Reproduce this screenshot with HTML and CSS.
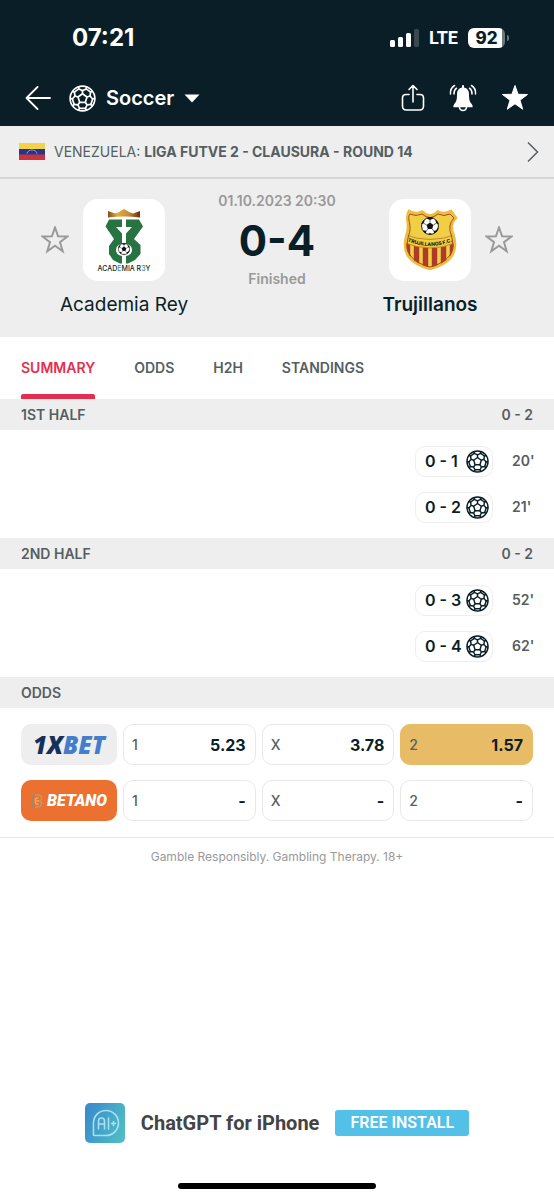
FILE: index.html
```html
<!DOCTYPE html>
<html lang="en">
<head>
    <meta charset="UTF-8">
    <meta name="viewport" content="width=device-width, initial-scale=1.0">
    <title>Academia Rey - Trujillanos</title>
    <link rel="stylesheet" href="styles.css">
</head>
<body>

    <!-- shared icons -->
    <svg class="sprite" aria-hidden="true">
        <symbol id="ball" viewBox="-12 -12 24 24">
            <g fill="none" stroke="currentColor" stroke-width="1.5" stroke-linejoin="round">
                <circle r="11"/>
                <path d="M0-4.2 4-1.3 2.5 3.4H-2.5L-4-1.3Z"/>
                <path d="M0-4.2V-7M4-1.3 6.7-2.2M2.5 3.4 4.1 5.7M-2.5 3.4-4.1 5.7M-4-1.3-6.7-2.2"/>
                <path d="M-3.3-10.5-3.3-8.5 0-7 3.3-8.5 3.3-10.5"/>
                <path d="M9.1-6.2 7.2-5.700 6.7-2.200 9 .5 11-.2"/>
                <path d="M8.900 6.500 7.500 5.200 4.100 5.700 2.600 8.700 3.600 10.400"/>
                <path d="M-8.900 6.500-7.500 5.200-4.100 5.700-2.600 8.700-3.600 10.400"/>
                <path d="M-9.1-6.2-7.2-5.700-6.7-2.200-9 .5-11-.2"/>
                <path d="M3.3-8.500 7.200-5.700M9 .5 7.500 5.200M2.600 8.700H-2.600M-7.500 5.200-9 .5M-7.200-5.700-3.300-8.500"/>
            </g>
        </symbol>
        <symbol id="star" viewBox="0 0 28 28">
            <path d="M14 1.5 17.1 10.3 26.5 10.5 19 16.2 21.7 25.2 14 19.8 6.3 25.2 9 16.2 1.5 10.5 10.9 10.3Z"/>
        </symbol>
        <symbol id="football" viewBox="-10 -10 20 20">
            <circle r="9.4" fill="#fff" stroke="#111" stroke-width="1"/>
            <path fill="#111" d="M0-4 3.8-1.2 2.4 3.3H-2.4L-3.8-1.2ZM-4-8.6 0-6.6 4-8.6 2-9.6H-2ZM9.5-1.8 7-3 5.8-6.5 7.6-5.7 9.4-3ZM9.4 1 7 4.4 7.6 6.4 9 4ZM4.6 8.2 4 5.6 7 4.6 7.6 6.2ZM-4.6 8.2-4 5.6-7 4.6-7.6 6.2ZM-9.5-1.8-7-3-5.8-6.5-7.6-5.7-9.4-3ZM-2 9.3 0 7.6 2 9.3Z"/>
            <path stroke="#111" stroke-width=".7" d="M0-4V-7M3.8-1.2 7-3M2.4 3.3 4.3 5.8M-2.4 3.3-4.3 5.8M-3.8-1.2-7-3"/>
        </symbol>
    </svg>

    <header class="top">
        <div class="status-bar">
            <span class="time">07:21</span>
            <div class="status-icons">
                <svg width="29" height="18" viewBox="0 0 29 18" fill="#fff">
                    <rect x="0" y="11" width="5" height="7" rx="1.5"/>
                    <rect x="8" y="8" width="5" height="10" rx="1.5"/>
                    <rect x="16" y="4" width="5" height="14" rx="1.5"/>
                    <rect x="24" y="0" width="5" height="18" rx="1.5" fill="#39494f"/>
                </svg>
                <span class="network">LTE</span>
                <span class="battery">92</span>
            </div>
        </div>
        <div class="app-bar">
            <button class="icon-button" aria-label="Back">
                <svg width="26" height="24" viewBox="0 0 26 24" fill="none" stroke="#fff" stroke-width="1.8" stroke-linecap="round" stroke-linejoin="round">
                    <path d="M12.500 1 1.500 12 12.500 23M1.500 12H25"/>
                </svg>
            </button>
            <button class="sport">
                <svg width="27" height="27"><use href="#ball"/></svg>
                <span>Soccer</span>
                <svg width="16" height="9" viewBox="0 0 16 9"><path d="M.5 .5H15.500L8 8.500Z" fill="#fff"/></svg>
            </button>
            <div class="actions">
                <button class="icon-button" aria-label="Share">
                    <svg width="24" height="28" viewBox="0 0 24 28" fill="none" stroke="#fff" stroke-width="1.600" stroke-linecap="round" stroke-linejoin="round">
                        <path d="M8 10.500H5Q1.500 10.500 1.500 14V22Q1.500 26 5.500 26H18.500Q22.500 26 22.500 22V14Q22.500 10.500 19 10.500H16M12 18V2M8 5.500 12 1.500 16 5.500"/>
                    </svg>
                </button>
                <button class="icon-button" aria-label="Notifications">
                    <svg width="28" height="28" viewBox="0 0 28 28" fill="none" stroke="#fff" stroke-width="1.500" stroke-linecap="round">
                        <path fill="#fff" stroke="none" d="M13 1.500Q14 .5 15 1.500V3.500Q20 4.600 20 10C20 15.500 20.500 17.500 22.700 20Q24.300 22.300 23.500 23.200H4.500Q3.700 22.300 5.300 20C7.500 17.500 8 15.500 8 10Q8 4.600 13 3.500Z"/>
                        <path d="M10.500 23.500Q11 26.600 14 26.600 17 26.600 17.500 23.500M5 10Q4.700 6.500 7.500 4.200M23 10Q23.300 6.500 20.500 4.200M1.500 10Q1 4.300 5.500 1.500M26.500 10Q27 4.300 22.500 1.500"/>
                    </svg>
                </button>
                <button class="icon-button" aria-label="Favourite match">
                    <svg width="28" height="28" fill="#fff" stroke="#fff" stroke-linejoin="round"><use href="#star"/></svg>
                </button>
            </div>
        </div>
    </header>

    <a href="#" class="league">
        <svg width="26" height="17" viewBox="0 0 26 17">
            <rect width="26" height="17" fill="#c9343c"/>
            <rect width="26" height="11.500" fill="#26348b"/>
            <rect width="26" height="6" fill="#f4d34a"/>
            <path d="M8 10.500Q9 7 13 7T18 10.500" fill="none" stroke="#c5cbe6" stroke-width="1" stroke-dasharray="1.200 .5"/>
        </svg>
        <span class="league-name">VENEZUELA: <b>LIGA FUTVE 2 - CLAUSURA - ROUND 14</b></span>
        <svg width="12" height="22" viewBox="0 0 12 22" fill="none" stroke="#555e61" stroke-width="1.500"><path d="M1 1.500 10.500 11 1 20.500"/></svg>
    </a>

    <main>
        <section class="match">
            <div class="team">
                <button class="icon-button star" aria-label="Follow Academia Rey">
                    <svg width="28" height="28"><use href="#star"/></svg>
                </button>
                <div class="crest">
                    <svg width="82" height="82" viewBox="0 0 82 82">
                        <defs>
                            <linearGradient id="crown">
                                <stop offset="0" stop-color="#8a4a1c"/>
                                <stop offset=".3" stop-color="#e2ad3e"/>
                                <stop offset=".65" stop-color="#c98a35"/>
                                <stop offset="1" stop-color="#6d2c14"/>
                            </linearGradient>
                        </defs>
                        <path d="M25 12 32 14.500 36 13 41 10 46 13 50 14.500 57 12V18.500Q41 16.500 25 18.500Z" fill="url(#crown)"/>
                        <path fill="#277442" d="M26 20.500H39V28H33L39 34.500V45Q33 46 33 51T39 57V64.500H37L30 61 26 55V47L31 40 22.500 27.500Z"/>
                        <path fill="#277442" d="M56 20.500H43V28H49L43 34.500V45Q49 46 49 51T43 57V64.500H45L52 61 57.500 55V46L51 40 60 27.500Z"/>
                        <use href="#football" x="35" y="44" width="12" height="12"/>
                        <text x="41" y="72" class="crest-name">ACAD<tspan fill="#2f9c6a">E</tspan>MIA R<tspan fill="#2f9c6a">3</tspan>Y</text>
                    </svg>
                </div>
                <h2 class="team-name">Academia Rey</h2>
            </div>

            <div class="result">
                <time class="date" datetime="2023-10-01T20:30">01.10.2023 20:30</time>
                <p class="score">0-4</p>
                <p class="state">Finished</p>
            </div>

            <div class="team winner">
                <div class="crest">
                    <svg width="82" height="82" viewBox="0 0 82 82">
                        <defs>
                            <clipPath id="shield">
                                <path d="M20 12Q27 16 33 12.500 37 16.500 41 16.500 45 16.500 49 12.500 55 16 62 12L67 19Q60 25 64.500 36C70 55 60 65 41 70 22 65 12 55 17.500 36 22 25 15 19 20 12Z"/>
                            </clipPath>
                        </defs>
                        <g clip-path="url(#shield)">
                            <rect width="82" height="82" fill="#f0cf45"/>
                            <path d="M14 43Q41 55 68 43V72H14Z" fill="#ae3b2a"/>
                            <path d="M23 44V70M32 44V70M41 44V70M50 44V70M59 44V70" stroke="#f0cf45" stroke-width="3.600"/>
                            <path d="M14 35Q41 46 68 35V43Q41 55 14 43Z" fill="#f0cf45" stroke="#b8752c" stroke-width=".8"/>
                        </g>
                        <path d="M20 12Q27 16 33 12.500 37 16.500 41 16.500 45 16.500 49 12.500 55 16 62 12L67 19Q60 25 64.500 36C70 55 60 65 41 70 22 65 12 55 17.500 36 22 25 15 19 20 12Z" fill="none" stroke="#efbd3c" stroke-width="2.600"/>
                        <path d="M21 15Q27 18 33 15 37 18.500 41 18.500 45 18.500 49 15 55 18 61 15L65 19Q58 26 62.500 37C67 54 59 63 41 68 23 63 15 54 19.500 37 24 26 17 19 21 15Z" fill="none" stroke="#9f4a2b" stroke-width="1"/>
                        <use href="#football" x="32" y="18" width="18" height="18"/>
                        <path id="ribbon" d="M18 42Q41 52 64 42" fill="none"/>
                        <text class="ribbon-name"><textPath href="#ribbon" startOffset="50%">TRUJILLANOS F.C.</textPath></text>
                    </svg>
                </div>
                <button class="icon-button star" aria-label="Follow Trujillanos">
                    <svg width="28" height="28"><use href="#star"/></svg>
                </button>
                <h2 class="team-name">Trujillanos</h2>
            </div>
        </section>

        <nav class="tabs">
            <a href="#" class="active">SUMMARY</a>
            <a href="#">ODDS</a>
            <a href="#">H2H</a>
            <a href="#">STANDINGS</a>
        </nav>

        <section>
            <h3 class="section-title">1ST HALF <span>0 - 2</span></h3>
            <ul class="incidents">
                <li><span class="goal">0 - 1 <svg width="23" height="23"><use href="#ball"/></svg></span><span class="minute">20'</span></li>
                <li><span class="goal">0 - 2 <svg width="23" height="23"><use href="#ball"/></svg></span><span class="minute">21'</span></li>
            </ul>
        </section>

        <section>
            <h3 class="section-title">2ND HALF <span>0 - 2</span></h3>
            <ul class="incidents">
                <li><span class="goal">0 - 3 <svg width="23" height="23"><use href="#ball"/></svg></span><span class="minute">52'</span></li>
                <li><span class="goal">0 - 4 <svg width="23" height="23"><use href="#ball"/></svg></span><span class="minute">62'</span></li>
            </ul>
        </section>

        <section>
            <h3 class="section-title">ODDS</h3>
            <div class="odds">
                <a href="#" class="bookmaker onexbet"><span>1X</span>BET</a>
                <button class="odd"><span>1</span><b>5.23</b></button>
                <button class="odd"><span>X</span><b>3.78</b></button>
                <button class="odd won"><span>2</span><b>1.57</b></button>
                <a href="#" class="bookmaker betano">
                    <svg width="12" height="14" viewBox="0 0 12 14" fill="none">
                        <path d="M4 1H7Q11 1 10.500 4 10.500 6 9 7 11 8 10.500 10 10 13 6 13H4" stroke="#b99a78" stroke-width="1.500"/>
                        <path d="M4 1Q1 2 1 7T4 13" stroke="#8f8a80" stroke-width="1.500"/>
                        <path d="M5 4H7.500M5 7H8M5 10H7.500M4.500 4V10" stroke="#ffa94f" stroke-width="1.500"/>
                    </svg>
                    <span>BETANO</span>
                </a>
                <button class="odd"><span>1</span><b>-</b></button>
                <button class="odd"><span>X</span><b>-</b></button>
                <button class="odd"><span>2</span><b>-</b></button>
            </div>
        </section>

        <p class="disclaimer">Gamble Responsibly. Gambling Therapy. 18+</p>
    </main>

    <aside class="ad">
        <svg width="40" height="40" viewBox="0 0 40 40">
            <defs>
                <linearGradient id="ad-fill" x1="0" y1=".3" x2="1" y2=".7">
                    <stop offset="0" stop-color="#3b8ccb"/>
                    <stop offset="1" stop-color="#4fbcc6"/>
                </linearGradient>
            </defs>
            <rect width="40" height="40" rx="5" fill="url(#ad-fill)"/>
            <g fill="none" stroke="#a8e2f2" stroke-width="1.600" stroke-linecap="round" stroke-linejoin="round">
                <path d="M8.500 32V20A12.500 12.500 0 1 1 21 32.500H9Z"/>
                <path d="M13.500 26V18Q13.500 15 16.500 15T19.500 18V26M13.500 21H19.500M23.500 15V26M26.500 20.500H30.500M28.500 18.500V22.500"/>
            </g>
        </svg>
        <span class="ad-title">ChatGPT for iPhone</span>
        <a href="#" class="install">FREE INSTALL</a>
    </aside>
    <div class="home-indicator"></div>

</body>
</html>
```
FILE: styles.css
```css
* {
    box-sizing: border-box;
}
body {
    margin: 0;
    min-height: 100vh;
    display: flex;
    flex-direction: column;
    font-family: Inter, "Liberation Sans", sans-serif;
    font-size: 14px;
    line-height: 20px;
    color: #555e61;
    background: #fff;
}
h2, h3, p, ul {
    margin: 0;
    padding: 0;
}
a {
    color: inherit;
    text-decoration: none;
}
button {
    padding: 0;
    border: 0;
    background: none;
    font: inherit;
    color: inherit;
    cursor: pointer;
}
svg {
    display: block;
    flex: none;
}
.sprite {
    display: none;
}

/* top bar */
.top {
    background: #0a1e28;
    color: #fff;
}
.status-bar {
    display: flex;
    align-items: center;
    justify-content: space-between;
    height: 70px;
    padding: 6px 49px 0 72px;
}
.time {
    font-size: 24px;
    font-weight: 700;
}
.status-icons {
    display: flex;
    align-items: center;
    gap: 10px;
}
.network {
    font-family: Roboto, sans-serif;
    font-size: 18px;
    font-weight: 700;
}
.battery {
    position: relative;
    width: 37px;
    border-radius: 6px;
    background: linear-gradient(90deg, #fff 92%, #6c787e 92%);
    color: #0a1e28;
    font-size: 17px;
    font-weight: 800;
    text-align: center;
}
.battery::after {
    content: "";
    position: absolute;
    top: 7px;
    right: -4px;
    width: 2px;
    height: 6px;
    border-radius: 0 2px 2px 0;
    background: #6c787e;
}
.app-bar {
    display: flex;
    align-items: center;
    gap: 18px;
    height: 56px;
    padding: 0 25px;
}
.sport {
    display: flex;
    align-items: center;
    gap: 10px;
    font-size: 20px;
    font-weight: 600;
}
.actions {
    display: flex;
    gap: 24px;
    margin-left: auto;
}

/* league */
.league {
    display: flex;
    align-items: center;
    gap: 9px;
    height: 53px;
    padding: 0 15px 0 19px;
    border-bottom: 2px solid #d6d6d6;
    background: #eee;
}
.league-name {
    flex: 1;
}
.league-name b {
    font-weight: 700;
}

/* match header */
.match {
    display: flex;
    justify-content: space-between;
    padding: 12px 41px 19px;
    background: #eee;
}
.team {
    display: grid;
    grid-template-columns: 28px 82px 28px;
    column-gap: 14px;
    row-gap: 11px;
    align-items: center;
}
.crest {
    grid-column: 2;
    margin-top: 8px;
    border-radius: 15px;
    background: #fff;
}
.star {
    margin-top: 8px;
    fill: none;
    stroke: #999;
    stroke-width: 2px;
}
.team-name {
    grid-column: 1 / 4;
    line-height: 26px;
    color: #0a1e28;
    font-size: 19px;
    font-weight: 400;
    text-align: center;
}
.winner .team-name {
    font-weight: 600;
}
.crest-name {
    fill: #222;
    font-size: 7px;
    font-weight: 500;
    text-anchor: middle;
}
.ribbon-name {
    fill: #2a2110;
    font-size: 5px;
    font-weight: 800;
    text-anchor: middle;
}
.result {
    color: #999;
    font-weight: 600;
    text-align: center;
}
.score {
    margin: 10px 0 8px;
    line-height: 40px;
    color: #0a1e28;
    font-size: 42px;
    font-weight: 700;
}

/* tabs */
.tabs {
    display: flex;
    gap: 39px;
    height: 62px;
    padding: 0 21px;
    line-height: 62px;
    font-weight: 600;
}
.tabs .active {
    color: #e52e4f;
}
.tabs .active::after {
    content: "";
    display: block;
    height: 5px;
    margin-top: -5px;
    border-radius: 2px 2px 0 0;
    background: #e52e4f;
}

/* incidents */
.section-title {
    display: flex;
    justify-content: space-between;
    padding: 0 21px;
    line-height: 31px;
    background: #eee;
    font-size: 14px;
    font-weight: 600;
}
.incidents {
    padding: 8px 20px;
    list-style: none;
}
.incidents li {
    display: flex;
    align-items: center;
    justify-content: flex-end;
    gap: 19px;
    height: 46px;
}
.goal {
    display: flex;
    align-items: center;
    justify-content: space-between;
    width: 78px;
    height: 31px;
    padding: 0 3px 0 9px;
    border: 1px solid #eee;
    border-radius: 10px;
    color: #0a1e28;
    font-size: 16px;
    font-weight: 600;
}
.minute {
    width: 22px;
    font-weight: 600;
    white-space: nowrap;
}

/* odds */
.odds {
    display: grid;
    grid-template-columns: 96px 1fr 1fr 1fr;
    gap: 15px 6px;
    padding: 16px 21px;
    border-bottom: 1px solid #e6e6e6;
}
.bookmaker {
    display: flex;
    align-items: center;
    justify-content: center;
    border-radius: 10px;
    font-style: italic;
}
.onexbet {
    background: #eee;
    color: #437dcb;
    font-family: "Open Sans", sans-serif;
    font-size: 24px;
    font-weight: 800;
}
.onexbet span {
    color: #16305c;
}
.betano {
    gap: 4px;
    background: #ec702f;
    color: #fff;
    font-family: Roboto, sans-serif;
    font-size: 16px;
    font-weight: 900;
}
.odd {
    display: flex;
    align-items: center;
    justify-content: space-between;
    height: 41px;
    padding: 0 9px 0 8px;
    border: 1px solid #e8e8e8;
    border-radius: 10px;
    font-weight: 500;
}
.odd b {
    color: #0a1e28;
    font-size: 16px;
    font-weight: 700;
}
.won {
    border-color: #e8bb67;
    background: #e8bb67;
}
.disclaimer {
    padding-top: 9px;
    color: #999;
    font-size: 12px;
    text-align: center;
}

/* advert */
.ad {
    display: flex;
    align-items: center;
    justify-content: center;
    gap: 16px;
    margin-top: auto;
    padding: 10px 0;
}
.ad-title {
    color: #444;
    font-family: Roboto, sans-serif;
    font-size: 20px;
    font-weight: 700;
}
.install {
    padding: 0 15px;
    border-radius: 3px;
    background: #53c0e8;
    color: #fff;
    font-family: Roboto, sans-serif;
    font-size: 16px;
    line-height: 26px;
    font-weight: 600;
}
.home-indicator {
    width: 198px;
    height: 6px;
    margin: 30px auto 11px;
    border-radius: 3px;
    background: #000;
}
```
